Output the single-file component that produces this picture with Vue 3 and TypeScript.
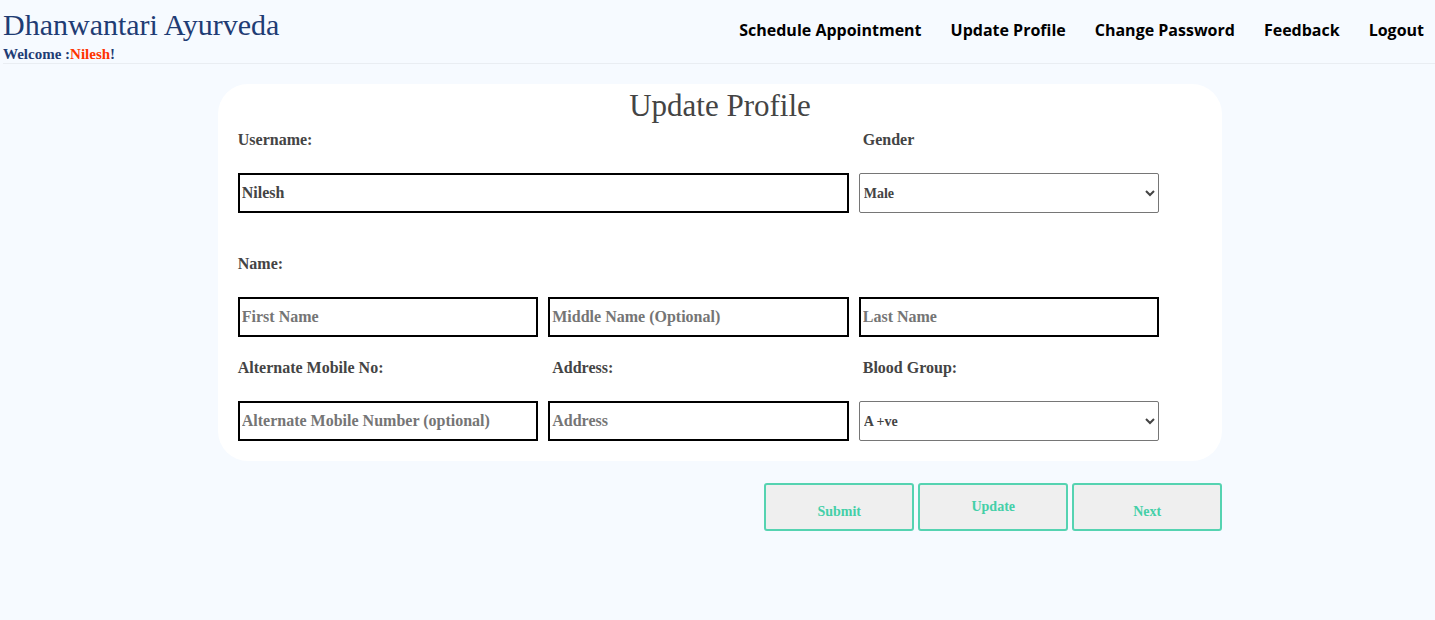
<script setup lang="ts">
import { ref } from 'vue'

const user = ref('Nilesh')
const links: string[] = ['Schedule Appointment', 'Update Profile', 'Change Password', 'Feedback', 'Logout']

const username = ref('Nilesh')
const gender = ref('Male')
const firstName = ref('')
const middleName = ref('')
const lastName = ref('')
const mobile = ref('')
const address = ref('')
const bloodGroup = ref('A +ve')

const genders: string[] = ['Male', 'Female', 'Other']
const bloodGroups: string[] = ['A +ve', 'A -ve', 'B +ve', 'B -ve', 'AB +ve', 'AB -ve', 'O +ve', 'O -ve']
</script>

<template>
  <div class="page">
    <header class="header">
      <div class="brand">
        <h1 class="brand-name">Dhanwantari Ayurveda</h1>
        <p class="welcome">Welcome :<span class="user">{{ user }}</span>!</p>
      </div>
      <nav class="nav">
        <a v-for="link in links" :key="link" href="#" class="nav-link">{{ link }}</a>
      </nav>
    </header>

    <main class="content">
      <form class="profile" @submit.prevent>
        <section class="card">
          <h2 class="title">Update Profile</h2>

          <div class="row row-spaced">
            <div class="field wide">
              <label for="username">Username:</label>
              <input id="username" v-model="username" type="text" />
            </div>
            <div class="field inset">
              <label for="gender">Gender</label>
              <select id="gender" v-model="gender">
                <option v-for="g in genders" :key="g">{{ g }}</option>
              </select>
            </div>
          </div>

          <div class="row">
            <div class="field">
              <label for="first-name">Name:</label>
              <input id="first-name" v-model="firstName" type="text" placeholder="First Name" />
            </div>
            <div class="field">
              <input v-model="middleName" type="text" placeholder="Middle Name (Optional)" aria-label="Middle name" />
            </div>
            <div class="field">
              <input v-model="lastName" type="text" placeholder="Last Name" aria-label="Last name" />
            </div>
          </div>

          <div class="row">
            <div class="field">
              <label for="mobile">Alternate Mobile No:</label>
              <input id="mobile" v-model="mobile" type="text" placeholder="Alternate Mobile Number (optional)" />
            </div>
            <div class="field inset">
              <label for="address">Address:</label>
              <input id="address" v-model="address" type="text" placeholder="Address" />
            </div>
            <div class="field inset">
              <label for="blood">Blood Group:</label>
              <select id="blood" v-model="bloodGroup">
                <option v-for="b in bloodGroups" :key="b">{{ b }}</option>
              </select>
            </div>
          </div>
        </section>

        <div class="actions">
          <button type="submit" class="action low">Submit</button>
          <button type="button" class="action">Update</button>
          <button type="button" class="action low">Next</button>
        </div>
      </form>
    </main>
  </div>
</template>

<style>
body {
  margin: 0;
  background: #f6faff;
}
</style>

<style scoped>
.page {
  font-family: 'Liberation Serif', 'Times New Roman', serif;
  color: #444444;
}

.header {
  display: flex;
  justify-content: space-between;
  margin-left: 3px;
  padding-right: 11px;
  border-bottom: 1px solid #e9edf2;
}

.brand {
  color: #1f3c74;
}

.brand-name {
  margin: 0;
  padding-top: 5px;
  font-size: 30px;
  line-height: 40px;
  font-weight: 400;
}

.welcome {
  margin: 0;
  font-size: 15px;
  line-height: 18px;
  font-weight: 700;
}

.user {
  color: #ff3300;
}

.nav {
  display: flex;
  gap: 29px;
  padding-top: 18px;
}

.nav-link {
  font-family: 'Open Sans', 'Noto Sans', sans-serif;
  font-size: 16px;
  line-height: 24px;
  font-weight: 700;
  color: #000000;
  text-decoration: none;
  white-space: nowrap;
}

.content {
  padding: 20px 0 0 5px;
}

.profile {
  width: 70vw;
  margin: 0 auto;
}

.card {
  padding: 0 63px 20px 20px;
  border-radius: 30px;
  background: #ffffff;
}

.title {
  margin: 0 -43px 0 0;
  font-size: 31px;
  line-height: 44px;
  font-weight: 400;
  text-align: center;
}

.row {
  display: grid;
  grid-template-columns: repeat(3, minmax(0, 1fr));
  gap: 10px;
  align-items: end;
  margin-bottom: 19px;
}

.row:last-child {
  margin-bottom: 0;
}

.row-spaced {
  margin-bottom: 39px;
}

.field {
  display: flex;
  flex-direction: column;
  gap: 21px;
}

.wide {
  grid-column: span 2;
}

label {
  font-size: 16px;
  line-height: 24px;
  font-weight: 700;
}

.inset label {
  padding-left: 4px;
}

input,
select {
  box-sizing: border-box;
  width: 100%;
  height: 40px;
  font-family: inherit;
  font-size: 16px;
  font-weight: 700;
  color: #444444;
  background: #ffffff;
}

input {
  padding: 1px 2px;
  border: 2px solid #000000;
}

input::placeholder {
  color: #757575;
}

select {
  padding: 0;
  font-size: 14px;
  border: 1px solid #767676;
  border-radius: 2px;
}

.actions {
  display: flex;
  justify-content: flex-end;
  gap: 4px;
  margin-top: 22px;
}

.action {
  box-sizing: border-box;
  width: 150px;
  height: 48px;
  padding: 0;
  border: 2px solid #55d3b1;
  border-radius: 3px;
  background: #efefef;
  font-family: inherit;
  font-size: 14px;
  font-weight: 700;
  color: #44cfa8;
}

.low {
  padding-top: 10px;
}
</style>
